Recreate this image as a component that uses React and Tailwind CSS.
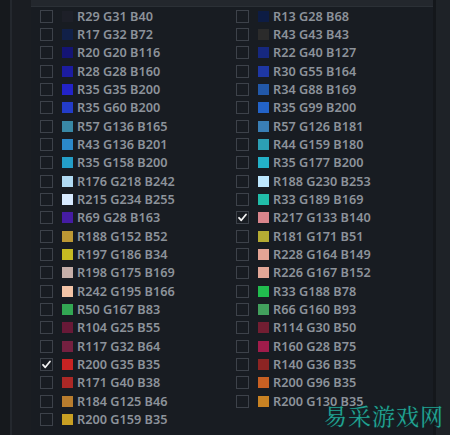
import React from "react";

const left = [
  [29, 31, 40], [17, 32, 72], [20, 20, 116], [28, 28, 160], [35, 35, 200], [35, 60, 200],
  [57, 136, 165], [43, 136, 201], [35, 158, 200], [176, 218, 242], [215, 234, 255], [69, 28, 163],
  [188, 152, 52], [197, 186, 34], [198, 175, 169], [242, 195, 166], [50, 167, 83], [104, 25, 55],
  [117, 32, 64], [200, 35, 35, true], [171, 40, 38], [184, 125, 46], [200, 159, 35],
];
const right = [
  [13, 28, 68], [43, 43, 43], [22, 40, 127], [30, 55, 164], [34, 88, 169], [35, 99, 200],
  [57, 126, 181], [44, 159, 180], [35, 177, 200], [188, 230, 253], [33, 189, 169], [217, 133, 140, true],
  [181, 171, 51], [228, 164, 149], [226, 167, 152], [33, 188, 78], [66, 160, 93], [114, 30, 50],
  [160, 28, 75], [140, 36, 35], [200, 96, 35], [200, 130, 35],
];

function Row({ c }) {
  const [r, g, b, checked] = c;
  return (
    <div className="flex items-center h-[18.33px]">
      <div className="w-[13px] h-[13px] border border-[#3d424a] flex items-center justify-center shrink-0">
        {checked && (
          <svg width="11" height="11" viewBox="0 0 11 11">
            <path d="M2 5.8 L4.3 8.3 L9 2.5" fill="none" stroke="#f2f2f2" strokeWidth="1.8" strokeLinecap="round" strokeLinejoin="round" />
          </svg>
        )}
      </div>
      <div className="w-[11px] h-[11px] ml-[9px] shrink-0" style={{ backgroundColor: `rgb(${r},${g},${b})` }} />
      <span className="ml-[4px] text-[12.7px] font-semibold text-[#8c929a] leading-none whitespace-nowrap">
        R{r} G{g} B{b}
      </span>
    </div>
  );
}

export default function App() {
  return (
    <div className="w-[450px] h-[435px] flex bg-[#1b1f25] overflow-hidden relative" style={{ fontFamily: '"Noto Sans", "Open Sans", sans-serif' }}>
      <div className="w-[31px] flex shrink-0">
        <div className="w-[10px] bg-[#16191d]" />
        <div className="w-[2px] bg-[#24282e]" />
        <div className="flex-1 bg-[#1a1d22]" />
      </div>
      <div className="flex-1 flex flex-col bg-[#181c22]">
        <div className="h-[7px] bg-[#23272d] border-b border-[#2b3036]" />
        <div className="flex pl-[9px]">
          <div className="w-[196px] flex flex-col">
            {left.map((c, i) => <Row key={i} c={c} />)}
          </div>
          <div className="flex-1 flex flex-col">
            {right.map((c, i) => <Row key={i} c={c} />)}
          </div>
        </div>
      </div>
      <div className="w-[17px] flex shrink-0">
        <div className="w-[3px] bg-[#14171b]" />
        <div className="flex-1 bg-[#1e2227]" />
      </div>
      <div className="absolute left-[324px] top-[404px] text-[23px] tracking-[1px] text-[#22a292] leading-none whitespace-nowrap" style={{ fontFamily: '"Noto Serif CJK SC", "Noto Sans CJK SC", serif', textShadow: "0 0 2px #0b3b36" }}>
        易采游戏网
      </div>
    </div>
  );
}
